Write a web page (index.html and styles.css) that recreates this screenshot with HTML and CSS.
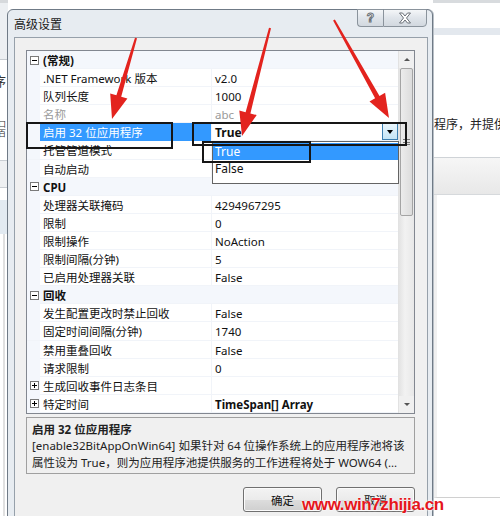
FILE: index.html
```html
<!DOCTYPE html>
<html>
<head>
<meta charset="utf-8">
<link rel="stylesheet" href="styles.css">
</head>
<body>
<div class="desk">
  <div class="bg">
    <div class="bg-left">
      <div class="l-top"></div>
      <div class="l-white"><span class="l-ch1">序</span><span class="l-ch2">口</span><span class="l-ch3">百</span></div>
      <div class="l-band1"></div>
      <div class="l-gap"></div>
      <div class="l-band2"></div>
      <div class="l-rest"></div>
    </div>
    <div class="bg-mid"></div>
    <div class="bg-right">
      <div class="r-top"></div>
      <div class="r-band0"></div>
      <div class="r-white"><span class="r-text">用程序，并提供</span></div>
      <div class="r-band1"></div>
      <div class="r-rest"></div>
    </div>
  </div>

  <div class="dialog">
    <div class="titlebar">
      <span class="title">高级设置</span>
      <div class="caps">
        <div class="cap help">?</div>
        <div class="cap close">
          <svg width="14" height="12" viewBox="0 0 14 12"><path d="M1.5 1h3l2.5 3 2.5-3h3l-4 5 4 5h-3L7 8l-2.5 3h-3l4-5z" fill="#fff" stroke="#6b7178" stroke-width="1" stroke-linejoin="round"/></svg>
        </div>
      </div>
    </div>
    <div class="client">
      <div class="grid">
        <div class="rows">
          <div class="row cat"><span class="gut"><i class="box minus"></i></span><span class="name">(常规)</span><span class="val"></span></div>
          <div class="row"><span class="gut"></span><span class="name">.NET Framework 版本</span><span class="val">v2.0</span></div>
          <div class="row"><span class="gut"></span><span class="name">队列长度</span><span class="val">1000</span></div>
          <div class="row dim"><span class="gut"></span><span class="name">名称</span><span class="val">abc</span></div>
          <div class="row sel"><span class="gut"></span><span class="name">启用 32 位应用程序</span><span class="val combo"><b>True</b><span class="ddbtn"><i class="tri"></i></span></span></div>
          <div class="row"><span class="gut"></span><span class="name">托管管道模式</span><span class="val"></span></div>
          <div class="row"><span class="gut"></span><span class="name">自动启动</span><span class="val"></span></div>
          <div class="row cat"><span class="gut"><i class="box minus"></i></span><span class="name">CPU</span><span class="val"></span></div>
          <div class="row"><span class="gut"></span><span class="name">处理器关联掩码</span><span class="val">4294967295</span></div>
          <div class="row"><span class="gut"></span><span class="name">限制</span><span class="val">0</span></div>
          <div class="row"><span class="gut"></span><span class="name">限制操作</span><span class="val">NoAction</span></div>
          <div class="row"><span class="gut"></span><span class="name">限制间隔(分钟)</span><span class="val">5</span></div>
          <div class="row"><span class="gut"></span><span class="name">已启用处理器关联</span><span class="val">False</span></div>
          <div class="row cat"><span class="gut"><i class="box minus"></i></span><span class="name">回收</span><span class="val"></span></div>
          <div class="row"><span class="gut"></span><span class="name">发生配置更改时禁止回收</span><span class="val">False</span></div>
          <div class="row"><span class="gut"></span><span class="name">固定时间间隔(分钟)</span><span class="val">1740</span></div>
          <div class="row"><span class="gut"></span><span class="name">禁用重叠回收</span><span class="val">False</span></div>
          <div class="row"><span class="gut"></span><span class="name">请求限制</span><span class="val">0</span></div>
          <div class="row"><span class="gut"><i class="box plus"></i></span><span class="name">生成回收事件日志条目</span><span class="val"></span></div>
          <div class="row"><span class="gut"><i class="box plus"></i></span><span class="name">特定时间</span><span class="val"><b>TimeSpan[] Array</b></span></div>
        </div>
        <div class="vscroll">
          <div class="sb-btn"><i class="sb-up"></i></div>
          <div class="sb-track">
            <div class="sb-thumb"><i class="grip"></i></div>
          </div>
          <div class="sb-btn"><i class="sb-down"></i></div>
        </div>
      </div>
      <div class="desc">
        <div class="desc-title">启用 32 位应用程序</div>
        <div class="desc-line">[enable32BitAppOnWin64] 如果针对 64 位操作系统上的应用程序池将该</div>
        <div class="desc-line">属性设为 True，则为应用程序池提供服务的工作进程将处于 WOW64 (...</div>
      </div>
      <div class="buttons">
        <div class="btn">确定</div>
        <div class="btn">取消</div>
      </div>
    </div>
  </div>

  <div class="dropdown">
    <div class="opt hl">True</div>
    <div class="opt">False</div>
  </div>

  <svg class="annot" width="500" height="516" viewBox="0 0 500 516">
    <rect x="27" y="123" width="145" height="25" fill="none" stroke="#161616" stroke-width="2"/>
    <rect x="193" y="123" width="213" height="22" fill="none" stroke="#161616" stroke-width="2"/>
    <rect x="203" y="142" width="107" height="20" fill="none" stroke="#161616" stroke-width="2"/>
    <polygon points="135,37.7 116.4,95.3 110.2,93.4 112,119 127.4,98.6 121.2,96.7 137,38.3" fill="#e3231e"/>
    <polygon points="269,27.7 245.6,112.2 239.3,110.5 242,136 256.7,115.1 250.4,113.4 271,28.3" fill="#e3231e"/>
    <polygon points="333.1,20.5 375.1,98.3 369.5,101.5 389,118 385.1,92.7 379.5,95.9 334.9,19.5" fill="#e3231e"/>
  </svg>

  <div class="watermark">www.win7zhijia.cn</div>
</div>
</body>
</html>
```
FILE: styles.css
```css
* { box-sizing: border-box; }
html, body { margin: 0; padding: 0; }
body { background: #fff; }

.desk {
  width: 500px;
  height: 516px;
  position: relative;
  overflow: hidden;
  background: #fff;
  font-family: "Noto Sans", "Noto Sans CJK SC", sans-serif;
  font-size: 11.5px;
  color: #111;
}

/* background window */
.bg {
  display: grid;
  grid-template-columns: 8px 1fr 67px;
  height: 516px;
}
.bg-left, .bg-right { display: flex; flex-direction: column; overflow: hidden; }
.l-top { height: 60px; background: #eceff2; border-top: 3px solid #d6d9dc; border-bottom: 1px solid #c6cbd0; }
.l-white { height: 100px; background: #fff; display: flex; flex-direction: column; font-size: 13px; line-height: 14px; color: #333; padding-top: 14px; }
.l-ch1 { margin-left: -7px; }
.l-ch2 { margin-left: -2px; margin-top: 31px; font-size: 8px; line-height: 9px; }
.l-ch3 { margin-left: -2px; font-size: 8px; line-height: 9px; }
.l-band1 { height: 28px; background: #eef0f2; border-top: 1px solid #c9ced3; border-bottom: 1px solid #c9ced3; }
.l-gap { height: 12px; background: #fff; }
.l-band2 { height: 34px; background: #e2eaf1; }
.l-rest { flex: 1; background: #fff; border-left: 3px solid #fff; box-shadow: inset 2px 0 0 #e0e0e0; }

.r-top { height: 28px; background: #fff; border-top: 3px solid #d8dbde; }
.r-band0 { height: 7px; background: #e3e8ee; }
.r-white { height: 122px; background: #fff; padding-top: 80px; font-size: 12px; color: #222; white-space: nowrap; }
.r-text { margin-left: -11px; }
.r-band1 { height: 38px; border-top: 1px solid #cfd3d7; border-bottom: 1px solid #d6d9dc; background: linear-gradient(#f6f6f6, #e8e8e8); }
.r-rest { flex: 1; background: #fff; border-left: 4px solid #f0f0f0; border-bottom: 1px solid #d0d0d0; margin-bottom: 18px; }

/* dialog */
.dialog {
  position: absolute;
  left: 7px;
  top: 9px;
  width: 426px;
  height: 530px;
  border: 1px solid #6f7a86;
  border-radius: 6px 6px 0 0;
  background: #e7ecf1;
  box-shadow: 1px 0 0 #b9c0c7;
  display: flex;
  flex-direction: column;
}
.titlebar {
  height: 27px;
  display: flex;
  align-items: flex-start;
  padding-left: 6px;
}
.title {
  font-family: "Noto Sans CJK SC", sans-serif;
  font-size: 12px;
  line-height: 14px;
  margin-top: 7px;
  color: #1a1a1a;
}
.caps {
  margin-left: auto;
  margin-right: 5px;
  margin-top: -1px;
  display: flex;
}
.cap {
  height: 18px;
  border: 1px solid #8a939c;
  background: linear-gradient(#f4f6f8, #dfe4ea 50%, #d2d8df);
  display: flex;
  align-items: center;
  justify-content: center;
}
.help {
  width: 26px;
  border-radius: 0 0 0 4px;
  border-right: none;
  font-family: "Liberation Sans", sans-serif;
  font-weight: bold;
  font-size: 12px;
  color: #fff;
  -webkit-text-stroke: 1px #6b7178;
}
.close { width: 44px; border-radius: 0 0 4px 0; }

.client {
  margin: 0 4px 0 6px;
  flex: 1;
  border: 1px solid #96a0aa;
  background: #f0f0f0;
  padding: 12px 12px 0 11px;
  display: flex;
  flex-direction: column;
}

.grid {
  height: 364px;
  border: 1px solid #828790;
  background: #fff;
  display: flex;
}
.rows { width: 371px; display: flex; flex-direction: column; }
.row {
  height: 18.1px;
  flex: none;
  display: grid;
  grid-template-columns: 13px 172px 1fr;
  border-bottom: 1px solid #f1f4f9;
  line-height: 17px;
  white-space: nowrap;
}
.gut { background: #f4f7fc; display: flex; align-items: center; padding-left: 3px; }
.name { padding-left: 3px; padding-top: 1px; border-right: 1px solid #f1f4f9; }
.val { padding-left: 3px; padding-top: 1px; }
.row.cat { background: #f4f7fc; }
.row.cat .name { font-weight: bold; border-right: none; }
.row.dim .name, .row.dim .val { color: #9a9a9a; }
.row.sel .name { background: #3399ff; color: #fff; }
.combo { display: flex; align-items: flex-start; padding-left: 3px; padding-top: 1px; font-size: 12px; }
.ddbtn {
  margin-left: auto;
  width: 16px;
  height: 17px;
  margin-top: -1px;
  border: 1px solid #3c7fb1;
  background: linear-gradient(#eaf6fd, #c4e5f6);
  display: flex;
  align-items: center;
  justify-content: center;
}
.tri { width: 0; height: 0; border-left: 3.5px solid transparent; border-right: 3.5px solid transparent; border-top: 4px solid #000; }

.box {
  width: 9px;
  height: 9px;
  border: 1px solid #7a7a7a;
  background: #fff;
  position: relative;
  display: block;
}
.box::before { content: ""; position: absolute; left: 1px; top: 3px; width: 5px; height: 1px; background: #000; }
.box.plus::after { content: ""; position: absolute; left: 3px; top: 1px; width: 1px; height: 5px; background: #000; }

.vscroll { width: 16px; display: flex; flex-direction: column; background: #eaeaea; border-left: 1px solid #e2e2e2; }
.sb-btn { height: 17px; display: flex; align-items: center; justify-content: center; background: #f0f0f0; }
.sb-up { width: 0; height: 0; border-left: 3px solid transparent; border-right: 3px solid transparent; border-bottom: 3px solid #555; }
.sb-down { width: 0; height: 0; border-left: 3px solid transparent; border-right: 3px solid transparent; border-top: 3px solid #555; }
.sb-track { flex: 1; background: linear-gradient(90deg, #e3e3e3, #f2f2f2 40%, #e8e8e8); }
.sb-thumb {
  height: 148px;
  margin: 0 1px;
  border: 1px solid #a4a4a4;
  border-radius: 2px;
  background: linear-gradient(90deg, #ececec, #dcdcdc);
  display: flex;
  align-items: center;
  justify-content: center;
}
.grip { width: 7px; height: 6px; border-top: 1px solid #777; border-bottom: 1px solid #777; position: relative; }
.grip::after { content: ""; position: absolute; left: 0; right: 0; top: 2px; height: 1px; background: #777; }

.desc {
  margin-top: 3px;
  height: 57px;
  border: 1px solid #a0a0a0;
  padding: 4px 0 0 5px;
  white-space: nowrap;
  overflow: hidden;
  color: #222;
}
.desc-title { font-weight: bold; line-height: 16px; }
.desc-line { line-height: 16.5px; }

.buttons { margin-top: 13px; display: flex; justify-content: flex-end; gap: 14px; }
.btn {
  width: 79px;
  height: 25px;
  border: 1px solid #707070;
  border-radius: 3px;
  background: linear-gradient(#f3f3f3, #ebebeb 50%, #dddddd 51%, #cfcfcf);
  box-shadow: inset 0 0 0 1px #fbfbfb;
  display: flex;
  align-items: center;
  justify-content: center;
  font-size: 11.5px;
  color: #111;
}

/* dropdown list overlay */
.dropdown {
  position: absolute;
  left: 212px;
  top: 141px;
  width: 187px;
  height: 43px;
  border: 1px solid #646464;
  background: #fff;
  padding-top: 1px;
  font-size: 12px;
}
.opt { height: 17px; line-height: 17px; padding-left: 2px; }
.opt.hl { background: #3399ff; color: #fff; }

.annot { position: absolute; left: 0; top: 0; pointer-events: none; }

.watermark {
  position: absolute;
  left: 302px;
  top: 495px;
  font-family: "Liberation Sans", sans-serif;
  font-weight: bold;
  font-size: 17px;
  letter-spacing: -0.4px;
  color: #e5161c;
  text-shadow: 0 0 2px #fff, 0 0 2px #fff;
  white-space: nowrap;
}
```
